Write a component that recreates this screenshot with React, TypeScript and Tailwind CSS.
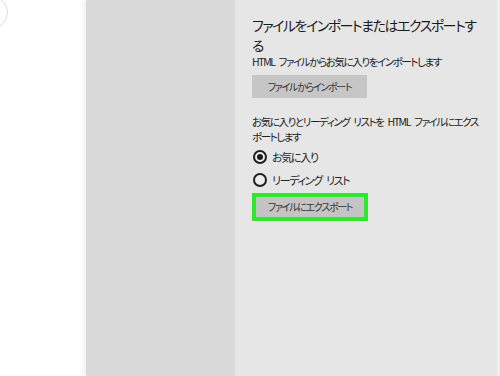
import React, { useState } from "react";

const jp = "font-['Noto_Sans_CJK_JP','Noto_Sans',sans-serif] [font-feature-settings:'palt'] [word-spacing:3px]";

const Radio = ({
  checked,
  label,
  onClick,
}: {
  checked: boolean;
  label: string;
  onClick: () => void;
}) => (
  <div className="flex items-center h-4 cursor-default" onClick={onClick}>
    <span className="w-[14px] h-[14px] ml-[1px] rounded-full border-2 border-[#1f1f1f] flex items-center justify-center bg-[#ececec]">
      {checked && <span className="w-[6px] h-[6px] rounded-full bg-[#1a1a1a]" />}
    </span>
    <span className="ml-[5px] text-[11px] tracking-[-1.3px] text-[#222]">{label}</span>
  </div>
);

const App = () => {
  const [selected, setSelected] = useState(0);
  return (
    <main className={`relative flex w-[500px] h-[376px] overflow-hidden bg-white ${jp}`}>
      <div className="absolute -left-[25px] -top-[4px] w-[33px] h-[33px] rounded-full border border-[#dcdcdc]" />
      <div className="w-[86px] shrink-0 bg-white" />
      <div className="w-[148px] shrink-0 bg-[#d9d9d9] shadow-[-3px_0_5px_rgba(0,0,0,0.06)]" />
      <div className="flex-1 bg-[#e6e6e6] border-l border-[#dadada] pl-[17px] pt-[15px]">
        <div className="text-[14px] leading-[20px] tracking-[-1.5px] text-[#1b1b1b] whitespace-nowrap">
          ファイルをインポートまたはエクスポートす
          <br />る
        </div>
        <div className="text-[10.5px] leading-[14px] tracking-[-1.4px] text-[#222] whitespace-nowrap">
          HTML ファイルからお気に入りをインポートします
        </div>
        <button className="mt-[6px] w-[115px] h-[23px] bg-[#c6c6c6] text-[10px] tracking-[-1.3px] text-[#333] whitespace-nowrap">
          ファイルからインポート
        </button>
        <div className="mt-[16px] text-[10.5px] leading-[15px] tracking-[-1.4px] text-[#222] whitespace-nowrap">
          お気に入りとリーディング リストを HTML ファイルにエクス
          <br />ポートします
        </div>
        <div className="mt-[5px] flex flex-col gap-[7px]">
          <Radio checked={selected === 0} label="お気に入り" onClick={() => setSelected(0)} />
          <Radio checked={selected === 1} label="リーディング リスト" onClick={() => setSelected(1)} />
        </div>
        <button className="mt-[5px] w-[116px] h-[28px] flex items-center justify-center border-4 border-[#2ee82e] bg-[#c4c4c4] text-[10px] leading-none tracking-[-1.3px] text-[#333] whitespace-nowrap">
          ファイルにエクスポート
        </button>
      </div>
      <div className="w-[3px] shrink-0 bg-[#efefef]" />
    </main>
  );
};

export default App;
